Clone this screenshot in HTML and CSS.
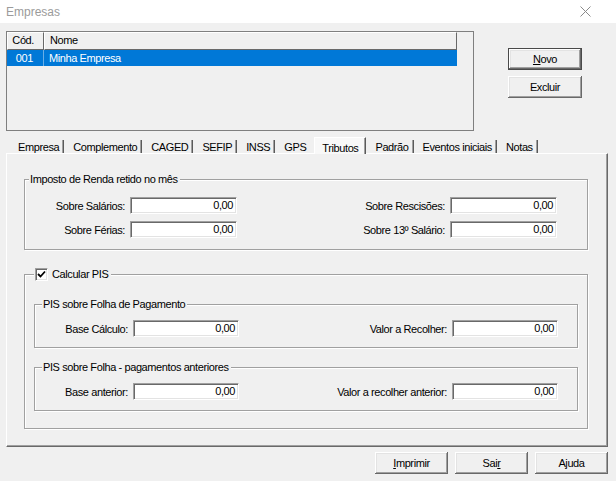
FILE: index.html
```html
<!DOCTYPE html>
<html lang="pt">
<head>
<meta charset="utf-8">
<title>Empresas</title>
<link rel="stylesheet" href="styles.css">
</head>
<body>
<div class="titlebar">
  <span class="title">Empresas</span>
  <svg class="close" viewBox="0 0 11 11" width="11" height="11"><path d="M0.5 0.5L10.5 10.5M10.5 0.5L0.5 10.5" stroke="#8a8a8a" stroke-width="1" fill="none"/></svg>
</div>
<div class="content">
  <div class="top">
    <div class="list">
      <div class="lhead">
        <div class="hc c1">Cód.</div>
        <div class="hc c2">Nome</div>
      </div>
      <div class="lrow sel">
        <div class="rc c1">001</div>
        <div class="rc c2">Minha Empresa</div>
      </div>
    </div>
    <div class="sidebtns">
      <button class="btn default"><u>N</u>ovo</button>
      <button class="btn">Excluir</button>
    </div>
  </div>
  <div class="tabs">
    <div class="tab">Empresa</div>
    <div class="tab">Complemento</div>
    <div class="tab">CAGED</div>
    <div class="tab">SEFIP</div>
    <div class="tab">INSS</div>
    <div class="tab before-active">GPS</div>
    <div class="tab active">Tributos</div>
    <div class="tab">Padrão</div>
    <div class="tab">Eventos iniciais</div>
    <div class="tab">Notas</div>
  </div>
  <div class="panel">
    <fieldset class="group g1">
      <legend>Imposto de Renda retido no mês</legend>
      <div class="fields">
        <label class="lbl">Sobre Salários:</label><div class="inp">0,00</div>
        <label class="lbl">Sobre Rescisões:</label><div class="inp">0,00</div>
        <label class="lbl">Sobre Férias:</label><div class="inp">0,00</div>
        <label class="lbl">Sobre 13º Salário:</label><div class="inp">0,00</div>
      </div>
    </fieldset>
    <fieldset class="group g2">
      <legend class="chklegend"><span class="chk"><svg viewBox="0 0 9 9" width="9" height="9"><path d="M1 4L3.5 6.5L8 1.5" stroke="#000" stroke-width="1.8" fill="none"/></svg></span><span>Calcular PIS</span></legend>
      <fieldset class="group sub">
        <legend>PIS sobre Folha de Pagamento</legend>
        <div class="fields subfields">
          <label class="lbl">Base Cálculo:</label><div class="inp">0,00</div>
          <label class="lbl">Valor a Recolher:</label><div class="inp">0,00</div>
        </div>
      </fieldset>
      <fieldset class="group sub">
        <legend>PIS sobre Folha - pagamentos anteriores</legend>
        <div class="fields subfields">
          <label class="lbl">Base anterior:</label><div class="inp">0,00</div>
          <label class="lbl">Valor a recolher anterior:</label><div class="inp">0,00</div>
        </div>
      </fieldset>
    </fieldset>
  </div>
  <div class="bottombtns">
    <button class="btn"><u>I</u>mprimir</button>
    <button class="btn">Sai<u>r</u></button>
    <button class="btn">Ajuda</button>
  </div>
</div>
</body>
</html>
```
FILE: styles.css
```css
* { box-sizing: border-box; }
html, body { margin: 0; padding: 0; }
body {
  width: 616px;
  height: 481px;
  overflow: hidden;
  background: #f0f0f0;
  font-family: "Liberation Sans", Arial, sans-serif;
  font-size: 11px;
  letter-spacing: -0.4px;
  color: #000;
}
.titlebar {
  height: 23px;
  background: #fff;
  display: flex;
  align-items: center;
  justify-content: space-between;
  padding: 0 25px 0 6px;
}
.title {
  font-size: 12px;
  letter-spacing: 0;
  color: #9b9b9b;
}
.close { display: block; }
.content { padding: 8px 8px 0 6px; }
.top { display: flex; align-items: flex-start; }
.list {
  width: 468px;
  height: 100px;
  border: 1px solid #7f7f7f;
}
.lhead { display: flex; width: 450px; height: 18px; }
.hc {
  height: 18px;
  line-height: 15px;
  background: #f0f0f0;
  border-top: 1px solid #fff;
  border-left: 1px solid #fff;
  border-right: 1px solid #696969;
  border-bottom: 1px solid #696969;
  white-space: nowrap;
}
.c1 { width: 37px; text-align: right; padding-right: 9px; }
.c2 { width: 413px; padding-left: 5px; }
.lrow { display: flex; width: 450px; height: 16px; line-height: 16px; }
.lrow.sel { background: #0078d7; color: #fff; }
.rc.c1 { border-right: 1px solid #6aaee6; padding-right: 10px; }
.sidebtns {
  display: flex;
  flex-direction: column;
  gap: 6px;
  margin-left: 34px;
  padding-top: 17px;
}
.btn {
  width: 74px;
  height: 22px;
  padding: 0;
  margin: 0;
  border: none;
  font: inherit;
  letter-spacing: -0.4px;
  color: #000;
  background: #f0f0f0;
  box-shadow: inset -1px -1px 0 #696969, inset 1px 1px 0 #fff, inset -2px -2px 0 #a0a0a0, inset 2px 2px 0 #e3e3e3;
}
.btn.default {
  border: 1px solid #4a4a4a;
}
.tabs {
  display: flex;
  align-items: flex-end;
  height: 16px;
  margin-top: 6px;
  padding-left: 2px;
}
.tab {
  height: 13px;
  line-height: 15px;
  padding: 0 4px 0 9px;
  border-right: 1px solid #5a5a5a;
  box-shadow: inset -1px 0 0 #a0a0a0;
  white-space: nowrap;
}
.tab:first-child { padding-left: 10px; }
.tab.before-active { border-right: none; box-shadow: none; padding-right: 8px; }
.tab.active {
  height: 17px;
  padding: 4px 7px 0 7px;
  line-height: 13px;
  background: #f8f8f8;
  border-top: 1px solid #fff;
  border-left: 1px solid #fff;
  margin-bottom: -1px;
  position: relative;
}
.panel {
  width: 602px;
  height: 294px;
  padding: 0 19px 0 17px;
  border-top: 1px solid #fff;
  border-left: 1px solid #fff;
  border-right: 1px solid #696969;
  border-bottom: 1px solid #696969;
  box-shadow: inset -1px -1px 0 #a0a0a0;
}
.group {
  margin: 0;
  min-width: 0;
  border: 1px solid #a0a0a0;
  box-shadow: 1px 1px 0 #fff, inset 1px 1px 0 #fff;
}
.group > legend {
  height: 13px;
  line-height: 13px;
  padding: 0 2px 0 1px;
  margin-left: 4px;
  background: #f0f0f0;
  white-space: nowrap;
}
.panel > .g1 { margin-top: 19px; padding: 11px 30px 11px 0; }
.panel > .g2 { margin-top: 18px; padding: 17px 9px 17px 9px; }
.g2 > legend.chklegend {
  display: flex;
  align-items: center;
  gap: 4px;
  margin-left: 0;
  padding: 0 3px 0 1px;
}
.chk {
  width: 13px;
  height: 13px;
  background: #fff;
  border-top: 1px solid #a0a0a0;
  border-left: 1px solid #a0a0a0;
  border-right: 1px solid #fff;
  border-bottom: 1px solid #fff;
  box-shadow: inset 1px 1px 0 #696969, inset -1px -1px 0 #e3e3e3;
  display: flex;
  align-items: center;
  justify-content: center;
}
.chk svg { display: block; }
.g2 > .sub { padding: 9px 19px 10px 0; }
.g2 > .sub > legend { margin-left: 7px; }
.g2 > .sub + .sub { margin-top: 13px; }
.fields {
  display: grid;
  grid-template-columns: 100px 107px 1fr 107px;
  column-gap: 5px;
  row-gap: 7px;
  align-items: center;
}
.subfields { grid-template-columns: 93px 106px 1fr 106px; }
.lbl { text-align: right; white-space: nowrap; }
.inp {
  height: 17px;
  line-height: 15px;
  background: #fff;
  text-align: right;
  padding-right: 3px;
  border-top: 1px solid #a0a0a0;
  border-left: 1px solid #a0a0a0;
  border-right: 1px solid #fff;
  border-bottom: 1px solid #fff;
  box-shadow: inset 1px 1px 0 #696969, inset -1px -1px 0 #e3e3e3;
}
.bottombtns {
  display: flex;
  justify-content: flex-end;
  gap: 7px;
  margin-top: 5px;
}
.bottombtns .btn { width: 73px; }
```
